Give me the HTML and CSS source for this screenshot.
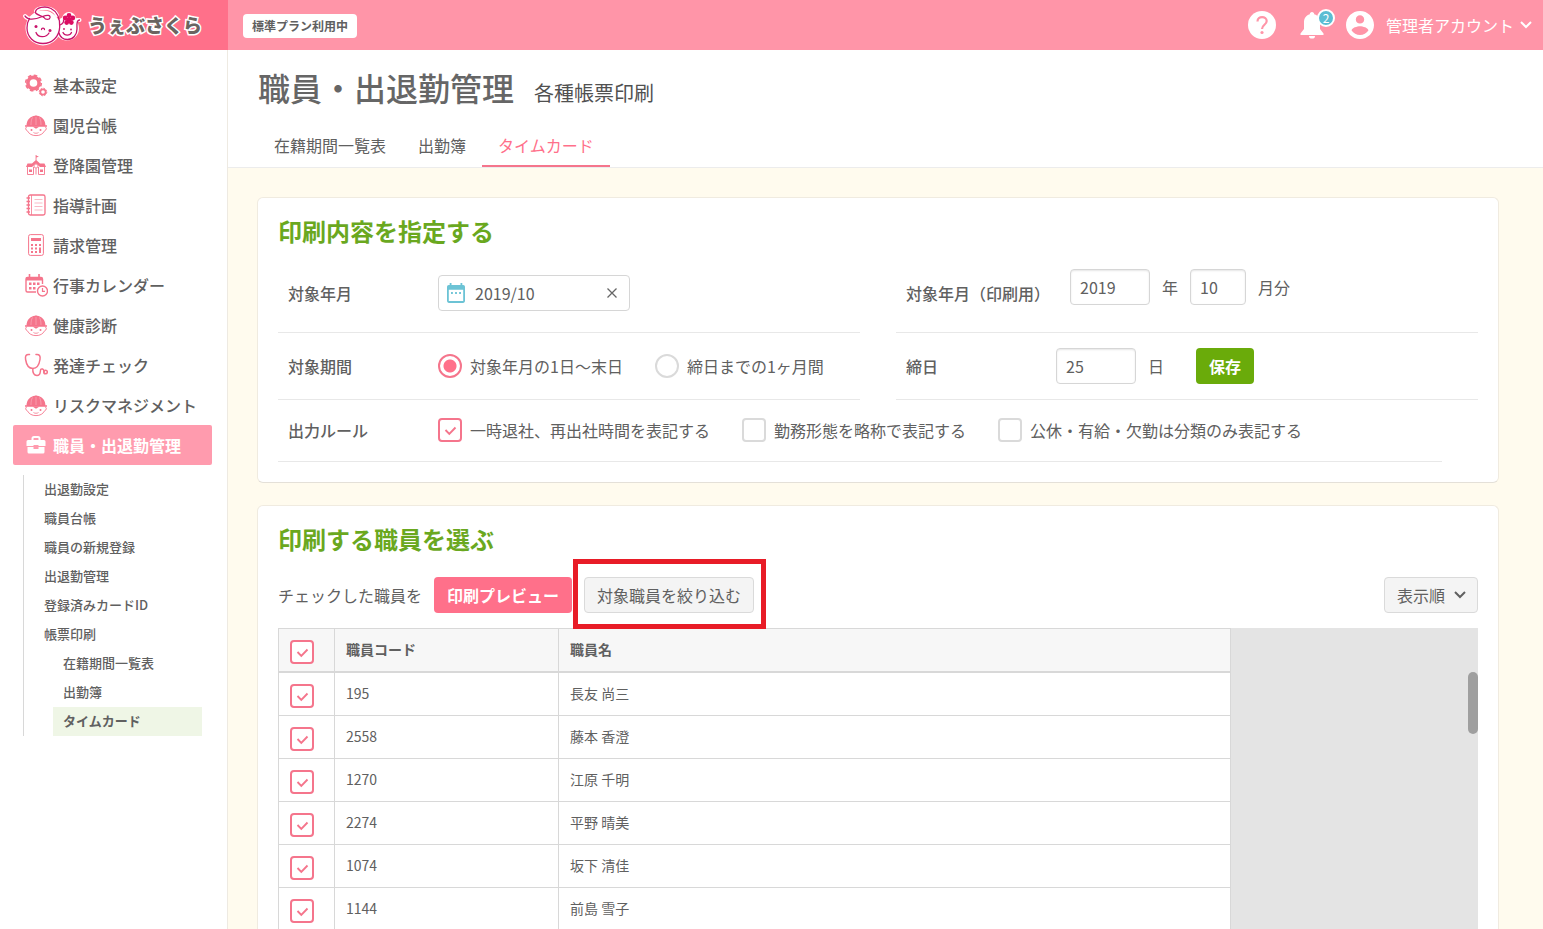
FILE: index.html
```html
<!DOCTYPE html>
<html lang="ja">
<head>
<meta charset="utf-8">
<meta name="viewport" content="width=device-width, initial-scale=1">
<title>職員・出退勤管理 各種帳票印刷</title>
<link rel="stylesheet" href="styles.css">
</head>
<body>
<svg class="symbols" aria-hidden="true">
  <symbol id="i-child" viewBox="0 0 24 24">
    <path d="M2.500 13C2.500 6.500 6.500 3.500 11 2.800q1-1.300 2 0C17.500 3.500 21.500 6.500 21.500 13z" fill="currentColor"/>
    <path d="M12 4V12M8.500 4.500C7.300 6.500 7 9 7 12M15.500 4.500C16.700 6.500 17 9 17 12" fill="none" stroke="#fff" stroke-width=".4" opacity=".7"/>
    <path d="M1 13h22" stroke="currentColor" stroke-width="1.500"/>
    <path d="M2.800 14c-1.600.200-1.500 3.200.400 3.600C5 21 8 22.600 12 22.600s7-1.600 8.800-5c1.900-.400 2-3.400.400-3.600" fill="none" stroke="currentColor" stroke-width=".9"/>
    <path d="M8.500 13.500h7l-3.500 2.300z" fill="currentColor"/>
    <circle cx="7.500" cy="17" r="1" fill="currentColor"/><circle cx="16.500" cy="17" r="1" fill="currentColor"/>
    <path d="M9.500 19.500c1.300 1 3.700 1 5 0" fill="none" stroke="currentColor" stroke-width=".8"/>
  </symbol>
  <symbol id="i-check" viewBox="0 0 24 24">
    <path d="M7.500 12l3.800 3.800 6.200-6.300" fill="none" stroke="currentColor" stroke-width="1.900"/>
  </symbol>
  <symbol id="i-chevron" viewBox="0 0 12 8">
    <path d="M1 1l5 5 5-5" fill="none" stroke="currentColor" stroke-width="2"/>
  </symbol>
</svg>

<header class="topbar">
  <a class="brand" href="#">
    <svg class="brand-mark" viewBox="22 2 60 44" aria-hidden="true">
      <g fill="#fff" stroke="#fff" stroke-width="4" stroke-linejoin="round" stroke-linecap="round">
        <circle cx="43" cy="27" r="15.500"/><circle cx="67" cy="27.500" r="10"/>
        <path d="M25 15c3 4 10 4 17 0M36 10c3-4 17-5 21 4" fill="none"/>
        <circle cx="69" cy="18" r="5"/><path d="M77 19l2.500 0"/>
      </g>
      <g fill="none" stroke="#c9146c" stroke-width="1.300" stroke-linecap="round">
        <path d="M25 15c2.500 3.500 9 4 17.500.500 5-2 8-1.500 7.500 1.200-.500 2.300-4.500 2.300-6-.200-1.500-2-9-2.500-8.500-5.500C36 6.500 45 4.500 51 7.500c6 3 9 9.500 8.700 18.500C59.200 36 52 42.500 43 42.500c-9.500 0-16-7-16-15.500 0-4 .500-6.500 2.500-9.500"/>
        <path d="M60 24c3-1 4-3.500 3.500-5M59 32c1 4 4.500 6.500 8.500 6.500 5.500 0 9.500-4.500 9.500-10.500 0-3-.300-5 .300-7 .300-1 1.200-1.800 2.200-2"/>
        <path d="M36 31.500c2 5.500 10 5.500 13 .500M41.500 28.500c0-1.800 3-1.800 3 0M63 31.500c1.500 3.500 7 3.500 8.500 0"/>
      </g>
      <g fill="#c9146c"><circle cx="36" cy="25.500" r="1.500"/><circle cx="50" cy="29.500" r="1.500"/><circle cx="64" cy="28" r=".9"/><circle cx="71" cy="28.500" r=".9"/></g>
      <g fill="#dc0d62"><circle cx="69" cy="14.500" r="2.400"/><circle cx="72.800" cy="17" r="2.400"/><circle cx="71.300" cy="21.500" r="2.400"/><circle cx="66.700" cy="21.500" r="2.400"/><circle cx="65.200" cy="17" r="2.400"/><circle cx="69" cy="18.500" r="2.500"/></g>
    </svg>
    <span class="brand-name">うぇぶさくら</span>
  </a>
  <div class="topbar-main">
    <span class="plan">標準プラン利用中</span>
    <div class="tools">
      <button class="tool" type="button" aria-label="ヘルプ">
        <svg class="icon-28" viewBox="0 0 28 28"><circle cx="14" cy="14" r="14" fill="#fff"/><path d="M9.500 10.500c0-6 9.200-5.500 9.200-.500 0 3.800-4.700 3.800-4.700 8" fill="none" stroke="#ff95a8" stroke-width="2.200"/><circle cx="14" cy="21.500" r="1.600" fill="#ff95a8"/></svg>
      </button>
      <button class="tool bell" type="button" aria-label="お知らせ">
        <svg class="icon-28" viewBox="0 0 28 28"><path d="M14 1c1.300 0 2.200 1 2.200 2.200 4.200 1.300 5.800 4.500 5.800 8.300v6.500l3.500 4.500v1.500h-23v-1.500L6 18v-6.500c0-3.800 1.600-7 5.800-8.300C11.800 2 12.700 1 14 1zM11 25h6a3 2.600 0 0 1-6 0z" fill="#fff"/></svg>
        <span class="count">2</span>
      </button>
      <button class="account" type="button" aria-haspopup="menu">
        <svg class="icon-28" viewBox="2 2 20 20" aria-hidden="true"><path fill="#fff" d="M12 2C6.480 2 2 6.480 2 12s4.480 10 10 10 10-4.480 10-10S17.520 2 12 2zm0 3c1.660 0 3 1.340 3 3s-1.340 3-3 3-3-1.340-3-3 1.340-3 3-3zm0 14.200c-2.500 0-4.710-1.280-6-3.220.030-1.990 4-3.080 6-3.080 1.990 0 5.970 1.090 6 3.080-1.290 1.940-3.500 3.220-6 3.220z"/></svg>
        <span class="account-name">管理者アカウント</span>
        <svg class="chevron" aria-hidden="true"><use href="#i-chevron"/></svg>
      </button>
    </div>
  </div>
</header>

<div class="layout">
  <nav class="sidebar" aria-label="メインメニュー">
    <ul class="menu">
      <li><a class="menu-item" href="#"><svg class="menu-icon" viewBox="0 0 24 24"><g fill="none" stroke="currentColor"><circle cx="9.500" cy="10" r="5.600" stroke-width="3.600"/><circle cx="9.500" cy="10" r="7.800" stroke-width="1.600" stroke-dasharray="3.600 2.530"/><circle cx="19" cy="19" r="2.700" stroke-width="1.800"/><circle cx="19" cy="19" r="3.800" stroke-width=".9" stroke-dasharray="1.700 1.280"/></g></svg>基本設定</a></li>
      <li><a class="menu-item" href="#"><svg class="menu-icon"><use href="#i-child"/></svg>園児台帳</a></li>
      <li><a class="menu-item" href="#"><svg class="menu-icon" viewBox="0 0 24 24"><path d="M11.600 2h.9v.800l2.500.700-2.500 1.100v2.600l3.500 3.300h4.500l1.500 3.500h-6l-4-3.500-4 3.500H2l1.500-3.500H8l3.600-3.300z" fill="currentColor"/><path d="M3.500 14v7.500h6V14M14.500 14v7.500h6V14M12 15v6.500" fill="none" stroke="currentColor" stroke-width=".9"/><path d="M5 16.500h3v2.500H5zM16 16.500h3v2.500h-3z" fill="currentColor"/><circle cx="12" cy="13" r="2" fill="#fff" stroke="currentColor" stroke-width=".8"/></svg>登降園管理</a></li>
      <li><a class="menu-item" href="#"><svg class="menu-icon" viewBox="0 0 24 24"><g fill="none" stroke="currentColor" stroke-width="1.300"><rect x="4.500" y="2" width="16.500" height="20" rx="1.800"/><path d="M7.500 2v20" stroke-width=".8"/><path d="M2.500 5H6M2.500 8.500H6M2.500 12H6M2.500 15.500H6M2.500 19H6"/><path d="M10.500 6.500h8M10.500 10h8M10.500 13.500h8M10.500 17h8" stroke-width=".5"/></g></svg>指導計画</a></li>
      <li><a class="menu-item" href="#"><svg class="menu-icon" viewBox="0 0 24 24"><rect x="4.600" y="1.600" width="14.800" height="20.800" rx="1.800" fill="none" stroke="currentColor" stroke-width="1"/><path d="M7 5h10v3H7zM7 11h2v2H7zM11 11h2v2h-2zM15 11h2v2h-2zM7 14.500h2v2H7zM11 14.500h2v2h-2zM7 18h2v2H7zM11 18h2v2h-2zM15 14.500h2V20h-2z" fill="currentColor"/></svg>請求管理</a></li>
      <li><a class="menu-item" href="#"><svg class="menu-icon" viewBox="0 0 24 24"><g fill="none" stroke="currentColor"><path d="M12 19H3.500Q2 19 2 17.500V6q0-1.500 1.500-1.500H17Q18.500 4.500 18.500 6v5" stroke-width="1.400"/><path d="M2 6h16" stroke-width="3"/><path d="M5.500 1v4M15 1v4" stroke-width="1.600"/><circle cx="18.500" cy="18" r="5" stroke-width="1.400"/><path d="M18.500 15v3.300H21" stroke-width="1.200"/></g><path d="M5 9.500h2.500V12H5zM9 9.500h2.500V12H9zM13 9.500h2.500V12H13zM5 14h2.500v2.500H5zM9 14h2.500v2.500H9z" fill="currentColor"/></svg>行事カレンダー</a></li>
      <li><a class="menu-item" href="#"><svg class="menu-icon"><use href="#i-child"/></svg>健康診断</a></li>
      <li><a class="menu-item" href="#"><svg class="menu-icon" viewBox="0 0 24 24"><g fill="none" stroke="currentColor" stroke-width="1.500" stroke-linecap="round"><path d="M5.500 1.500C2 1 1 3 1.600 6.500 2.300 11 4.500 15.500 8.800 15.500S15.300 11 16 6.500C16.600 3 15.500 1 12 1.500"/><path d="M8.800 15.500c-.300 4.500 1.200 7 4.200 7 5.500 0 1.500-7.500 5.500-6.500 1.500.500 1 2 2 3"/><circle cx="21.500" cy="19" r="1.800"/></g></svg>発達チェック</a></li>
      <li><a class="menu-item" href="#"><svg class="menu-icon"><use href="#i-child"/></svg>リスクマネジメント</a></li>
      <li><a class="menu-item is-active" href="#"><svg class="menu-icon" viewBox="0 0 24 24"><path d="M8.500 7V5.500q0-1.500 1.500-1.500h4q1.500 0 1.500 1.500V7" fill="none" stroke="#fff" stroke-width="2"/><path d="M4 7h16q1.500 0 1.500 1.500V13h-7v-1h-5v1h-7V8.500Q2.500 7 4 7zM3.500 14h6v2h5v-2h6v5q0 1.500-1.500 1.500H5q-1.500 0-1.500-1.500z" fill="#fff"/></svg>職員・出退勤管理</a>
        <ul class="submenu">
          <li><a href="#">出退勤設定</a></li>
          <li><a href="#">職員台帳</a></li>
          <li><a href="#">職員の新規登録</a></li>
          <li><a href="#">出退勤管理</a></li>
          <li><a href="#">登録済みカードID</a></li>
          <li><a href="#">帳票印刷</a>
            <ul class="submenu-nested">
              <li><a href="#">在籍期間一覧表</a></li>
              <li><a href="#">出勤簿</a></li>
              <li><a class="is-current" href="#" aria-current="page">タイムカード</a></li>
            </ul>
          </li>
        </ul>
      </li>
    </ul>
  </nav>

  <main class="page">
    <div class="page-head">
      <div class="page-title">
        <h1>職員・出退勤管理</h1>
        <p>各種帳票印刷</p>
      </div>
      <nav class="tabs" aria-label="帳票">
        <a class="tab" href="#">在籍期間一覧表</a>
        <a class="tab" href="#">出勤簿</a>
        <a class="tab is-active" href="#" aria-current="page">タイムカード</a>
      </nav>
    </div>

    <div class="content">
      <section class="card">
        <h2>印刷内容を指定する</h2>
        <form class="form">
          <div class="row row-month">
            <label class="row-label" for="month">対象年月</label>
            <div class="date-field">
              <svg class="date-icon" viewBox="0 0 20 22" aria-hidden="true"><path d="M3 0h2v2h10V0h2v2h1q2 0 2 2v16q0 2-2 2H2q-2 0-2-2V4q0-2 2-2h1zM2 7.500V20h16V7.500z" fill="#6cc3d5" fill-rule="evenodd"/><path d="M4.500 10h2v2h-2zM9 10h2v2H9zM13.500 10h2v2h-2z" fill="#6cc3d5"/></svg>
              <input id="month" type="text" value="2019/10">
              <button class="clear" type="button" aria-label="クリア"><svg viewBox="0 0 10 10"><path d="M.500.500l9 9M9.500.500l-9 9" stroke="#666" stroke-width="1.300"/></svg></button>
            </div>
          </div>
          <div class="row row-month print-month">
            <label class="row-label" for="year">対象年月（印刷用）</label>
            <div class="fields">
              <input class="box" id="year" type="text" value="2019">
              <span>年</span>
              <input class="box box-narrow" type="text" value="10" aria-label="月">
              <span>月分</span>
            </div>
          </div>
          <div class="row row-period">
            <span class="row-label" id="period">対象期間</span>
            <div class="choices" role="radiogroup" aria-labelledby="period">
              <label class="choice"><input class="radio" type="radio" name="period" checked>対象年月の1日～末日</label>
              <label class="choice"><input class="radio" type="radio" name="period">締日までの1ヶ月間</label>
            </div>
          </div>
          <div class="row row-period">
            <label class="row-label" for="closing">締日</label>
            <div class="fields">
              <input class="box" id="closing" type="text" value="25">
              <span>日</span>
              <button class="btn btn-save" type="button">保存</button>
            </div>
          </div>
          <div class="row row-rule">
            <span class="row-label" id="rule">出力ルール</span>
            <div class="choices" role="group" aria-labelledby="rule">
              <label class="choice"><span class="check"><input type="checkbox" checked><svg><use href="#i-check"/></svg></span>一時退社、再出社時間を表記する</label>
              <label class="choice"><span class="check"><input type="checkbox"><svg><use href="#i-check"/></svg></span>勤務形態を略称で表記する</label>
              <label class="choice"><span class="check"><input type="checkbox"><svg><use href="#i-check"/></svg></span>公休・有給・欠勤は分類のみ表記する</label>
            </div>
          </div>
        </form>
      </section>

      <section class="card">
        <h2>印刷する職員を選ぶ</h2>
        <div class="toolbar">
          <span>チェックした職員を</span>
          <button class="btn btn-print" type="button">印刷プレビュー</button>
          <span class="marked"><button class="btn btn-plain" type="button">対象職員を絞り込む</button></span>
          <button class="btn btn-plain btn-sort" type="button" aria-haspopup="menu">表示順<svg class="chevron" aria-hidden="true"><use href="#i-chevron"/></svg></button>
        </div>
        <div class="grid">
          <table class="staff">
            <colgroup><col class="col-check"><col class="col-code"><col class="col-name"></colgroup>
            <thead>
              <tr><th><label class="check"><input type="checkbox" checked aria-label="すべて選択"><svg><use href="#i-check"/></svg></label></th><th scope="col">職員コード</th><th scope="col">職員名</th></tr>
            </thead>
            <tbody>
              <tr><td><label class="check"><input type="checkbox" checked aria-label="長友 尚三"><svg><use href="#i-check"/></svg></label></td><td>195</td><td>長友 尚三</td></tr>
              <tr><td><label class="check"><input type="checkbox" checked aria-label="藤本 香澄"><svg><use href="#i-check"/></svg></label></td><td>2558</td><td>藤本 香澄</td></tr>
              <tr><td><label class="check"><input type="checkbox" checked aria-label="江原 千明"><svg><use href="#i-check"/></svg></label></td><td>1270</td><td>江原 千明</td></tr>
              <tr><td><label class="check"><input type="checkbox" checked aria-label="平野 晴美"><svg><use href="#i-check"/></svg></label></td><td>2274</td><td>平野 晴美</td></tr>
              <tr><td><label class="check"><input type="checkbox" checked aria-label="坂下 清佳"><svg><use href="#i-check"/></svg></label></td><td>1074</td><td>坂下 清佳</td></tr>
              <tr><td><label class="check"><input type="checkbox" checked aria-label="前島 雪子"><svg><use href="#i-check"/></svg></label></td><td>1144</td><td>前島 雪子</td></tr>
            </tbody>
          </table>
          <div class="grid-rest"><div class="scroll-thumb"></div></div>
        </div>
      </section>
    </div>
  </main>
</div>
</body>
</html>
```
FILE: styles.css
```css
* { box-sizing: border-box; }

body {
  margin: 0;
  height: 100vh;
  overflow: hidden;
  display: flex;
  flex-direction: column;
  font: 16px/24px "Noto Sans CJK JP", sans-serif;
  color: #606060;
  background: #fffbee;
}

h1, h2, p, ul { margin: 0; padding: 0; }
ul { list-style: none; }
a { color: inherit; text-decoration: none; }
button, input { font: inherit; color: inherit; margin: 0; }
button { cursor: pointer; }
svg { display: block; flex: none; }
.symbols { position: absolute; width: 0; height: 0; }

/* Top bar */
.topbar { display: flex; flex: none; height: 50px; color: #fff; background: #ff95a8; }
.brand { display: flex; align-items: center; gap: 6px; flex: none; width: 228px; padding-left: 22px; background: #ff708a; }
.brand-mark { width: 60px; height: 44px; }
.brand-name {
  font-size: 19px;
  font-weight: 900;
  color: #6b6460;
  -webkit-text-stroke: 3px #fff;
  paint-order: stroke fill;
  white-space: nowrap;
}
.topbar-main { display: flex; flex: 1; align-items: center; justify-content: space-between; padding: 0 11px 0 15px; }
.plan { margin-top: 2px; padding: 0 9px; border-radius: 4px; font-size: 12px; font-weight: 700; color: #606060; background: #fff; }
.tools { display: flex; align-items: center; gap: 22px; }
.tool, .account { padding: 0; border: 0; background: none; }
.icon-28 { width: 28px; height: 28px; }
.bell { position: relative; margin-right: -2px; }
.count {
  position: absolute;
  top: -2px;
  right: -9px;
  width: 18px;
  height: 18px;
  border: 2px solid #fff;
  border-radius: 50%;
  font-size: 12px;
  line-height: 14px;
  background: #5bbdd3;
}
.account { display: flex; align-items: center; }
.account-name { margin: 0 6px 0 12px; }
.chevron { width: 12px; height: 8px; }

/* Sidebar */
.layout { display: flex; flex: 1; min-height: 0; }
.sidebar { flex: none; width: 228px; padding: 15px 15px 0 13px; border-right: 1px solid #eeeae2; background: #fff; }
.menu-item { display: flex; align-items: center; gap: 5px; height: 40px; padding-left: 11px; border-radius: 2px; font-weight: 500; white-space: nowrap; }
.menu-icon { width: 24px; height: 24px; color: #f5758c; }
.menu-item.is-active { font-weight: 700; color: #fff; background: #ff9bae; }
.submenu { margin: 10px 10px 0 10px; border-left: 1px solid #d8d8d8; font-size: 13px; line-height: 27px; font-weight: 500; }
.submenu a { display: block; padding: 0 0 2px 20px; }
.submenu-nested { margin-left: 29px; }
.submenu-nested a { padding-left: 10px; }
.submenu .is-current { font-weight: 700; background: #eff6e6; }

/* Page heading */
.page { flex: 1; min-width: 0; overflow: hidden; }
.page-head { padding: 13px 30px 0; border-bottom: 1px solid #ececec; background: #fff; }
.page-title { display: flex; align-items: baseline; gap: 20px; margin-bottom: 14px; }
.page-title h1 { font-size: 32px; line-height: 48px; font-weight: 500; color: #666; }
.page-title p { font-size: 20px; color: #505050; }
.tabs { display: flex; }
.tab { padding: 8px 16px; border-bottom: 2px solid transparent; }
.tab.is-active { color: #ff708a; border-color: #f5758c; }

/* Cards */
.content { display: flex; flex-direction: column; gap: 22px; padding: 29px 44px 29px 29px; }
.card { padding: 15px 20px 20px; border: 1px solid #f0ebe0; border-bottom-color: #e4e0d8; border-radius: 6px; background: #fff; }
.card h2 { margin-bottom: 1px; font-size: 24px; line-height: 36px; font-weight: 700; color: #6aa81f; }

/* Print settings */
.form { display: grid; grid-template-columns: 1fr 1fr; column-gap: 36px; }
.row { display: flex; align-items: center; border-bottom: 1px solid #e8e8e8; }
.row-label { min-width: 160px; padding: 0 10px; font-weight: 500; white-space: nowrap; }
.row-month { height: 83px; padding-top: 4px; }
.row-period { height: 67px; }
.row-rule { grid-column: 1 / -1; height: 62px; margin-right: 36px; padding-bottom: 2px; }
.print-month .row-label { padding-right: 20px; }
.print-month .fields { padding-bottom: 12px; }

.date-field { display: flex; align-items: center; width: 192px; height: 36px; padding: 0 12px 0 8px; border: 1px solid #d6d6d6; border-radius: 4px; background: #fff; }
.date-icon { width: 18px; height: 20px; }
.date-field input { flex: 1; min-width: 0; padding: 0 0 0 10px; border: 0; outline: 0; background: none; }
.clear { padding: 0; border: 0; background: none; }
.clear svg { width: 10px; height: 10px; }

.fields { display: flex; align-items: center; gap: 12px; }
.box { width: 80px; height: 36px; padding: 0 9px; border: 1px solid #d6d6d6; border-radius: 4px; background: #fff; box-shadow: inset 0 1px 2px #e6e6e6; }
.box-narrow { width: 56px; }

.choices { display: flex; gap: 32px; white-space: nowrap; }
.choice { display: flex; align-items: center; gap: 8px; }
.radio { appearance: none; width: 24px; height: 24px; border: 2px solid #dadada; border-radius: 50%; background: #fff; }
.radio:checked { border-color: #f5758c; background: radial-gradient(circle, #ff708a 6px, #fff 7px); }
.check { display: grid; width: 24px; height: 24px; }
.check input, .check svg { grid-area: 1 / 1; width: 24px; height: 24px; }
.check input { appearance: none; border: 2px solid #dadada; border-radius: 4px; background: #fff; }
.check input:checked { border-color: #f5758c; }
.check svg { display: none; color: #f5758c; pointer-events: none; }
.check input:checked + svg { display: block; }

/* Buttons */
.btn { height: 36px; padding: 0 12px; border: 1px solid transparent; border-radius: 4px; white-space: nowrap; }
.btn-save { margin-left: 20px; font-weight: 700; color: #fff; background: #6aab0a; }
.btn-print { font-weight: 700; color: #fff; background: #ff708a; }
.btn-plain { border-color: #dadada; background: #f4f4f4; }
.btn-sort { display: flex; align-items: center; gap: 9px; margin-left: auto; padding-right: 11px; }

/* Staff list */
.toolbar { display: flex; align-items: center; gap: 12px; margin: 20px 0 15px; }
.marked { position: relative; }
.marked::after {
  content: "";
  position: absolute;
  inset: -18px -12px -16px -11px;
  border: 5px solid #e81c27;
  pointer-events: none;
}
.grid { display: flex; }
.staff { flex: none; width: 953px; table-layout: fixed; border-collapse: separate; border-spacing: 0; border-left: 1px solid #d8d8d8; font-size: 14px; line-height: 20px; }
.col-check { width: 56px; }
.col-code { width: 224px; }
.staff th, .staff td { height: 43px; padding: 0 11px 3px; border-right: 1px solid #d8d8d8; border-bottom: 1px solid #d8d8d8; text-align: left; }
.staff th { height: 45px; border-top: 1px solid #d8d8d8; border-bottom-width: 2px; background: #f7f7f7; font-weight: 700; }
.staff th:first-child, .staff td:first-child { padding: 4px 0 0 11px; }
.grid-rest { display: flex; flex: 1; justify-content: flex-end; padding-top: 44px; background: #e4e4e4; }
.scroll-thumb { width: 10px; height: 62px; border-radius: 5px; background: #9f9f9f; }
```
